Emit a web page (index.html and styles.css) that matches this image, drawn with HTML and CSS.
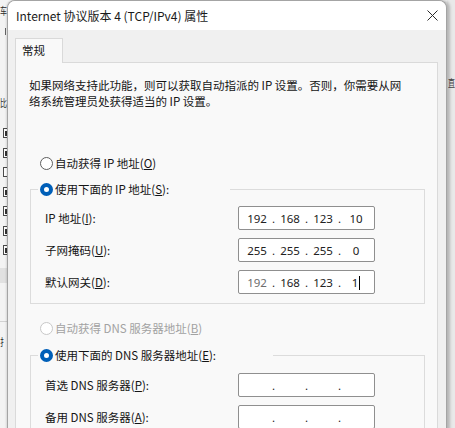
FILE: index.html
```html
<!DOCTYPE html>
<html lang="zh-CN">
<head>
<meta charset="utf-8">
<title>Internet 协议版本 4 (TCP/IPv4) 属性</title>
<link rel="stylesheet" href="styles.css">
</head>
<body>
<div class="desk">
  <!-- window behind the dialog: only its edges show -->
  <div class="bw-left">
    <span class="frag frag-top">车</span>
    <span class="tick"></span>
    <span class="frag frag-mid">比</span>
    <ul class="checks">
      <li class="cb on"></li>
      <li class="cb on"></li>
      <li class="cb"></li>
      <li class="cb on"></li>
      <li class="cb on"></li>
      <li class="cb on"></li>
      <li class="cb on"></li>
    </ul>
    <div class="bw-band"></div>
    <div class="bw-rule"></div>
    <span class="frag frag-low">扌</span>
  </div>
  <div class="bw-main"></div>
  <div class="bw-right"><span class="frag frag-r">直</span></div>

  <section class="dialog">
    <header class="titlebar">
      <span class="title">Internet 协议版本 4 (TCP/IPv4) 属性</span>
      <svg class="close" width="11" height="11" viewBox="0 0 11 11" aria-label="关闭">
        <path d="M0.5 0.5 L10.5 10.5 M10.5 0.5 L0.5 10.5" stroke="#2b2b2b" stroke-width="1" fill="none"/>
      </svg>
    </header>

    <nav class="tabs"><span class="tab">常规</span></nav>

    <div class="panel">
      <p class="desc">如果网络支持此功能，则可以获取自动指派的 IP 设置。否则，你需要从网<br>络系统管理员处获得适当的 IP 设置。</p>

      <div class="opt opt-ip-auto">
        <span class="radio"></span><span>自动获得 IP 地址(<u>O</u>)</span>
      </div>

      <fieldset class="group">
        <legend class="opt legend-ip">
          <span class="radio checked"></span><span>使用下面的 IP 地址(<u>S</u>):</span>
        </legend>
        <div class="rows">
          <label>IP 地址(<u>I</u>):</label>
          <div class="ip"><span class="seg">192</span><span class="dot">.</span><span class="seg">168</span><span class="dot">.</span><span class="seg">123</span><span class="dot">.</span><span class="seg">10</span></div>
          <label>子网掩码(<u>U</u>):</label>
          <div class="ip"><span class="seg">255</span><span class="dot">.</span><span class="seg">255</span><span class="dot">.</span><span class="seg">255</span><span class="dot">.</span><span class="seg">0</span></div>
          <label>默认网关(<u>D</u>):</label>
          <div class="ip"><span class="seg seg-faint">192</span><span class="dot">.</span><span class="seg">168</span><span class="dot">.</span><span class="seg">123</span><span class="dot">.</span><span class="seg">1<span class="caret"></span></span></div>
        </div>
      </fieldset>

      <div class="opt opt-dns-auto disabled">
        <span class="radio"></span><span>自动获得 DNS 服务器地址(<u>B</u>)</span>
      </div>

      <fieldset class="group group-dns">
        <legend class="opt legend-dns">
          <span class="radio checked"></span><span>使用下面的 DNS 服务器地址(<u>E</u>):</span>
        </legend>
        <div class="rows">
          <label>首选 DNS 服务器(<u>P</u>):</label>
          <div class="ip"><span class="seg"></span><span class="dot">.</span><span class="seg"></span><span class="dot">.</span><span class="seg"></span><span class="dot">.</span><span class="seg"></span></div>
          <label>备用 DNS 服务器(<u>A</u>):</label>
          <div class="ip"><span class="seg"></span><span class="dot">.</span><span class="seg"></span><span class="dot">.</span><span class="seg"></span><span class="dot">.</span><span class="seg"></span></div>
        </div>
      </fieldset>
    </div>
  </section>
</div>
</body>
</html>
```

FILE: styles.css
```css
* { box-sizing: border-box; }

body {
  margin: 0;
  font-family: "Noto Sans CJK SC", "Noto Sans", sans-serif;
  font-size: 11.5px;
  color: #141414;
  background: #efefef;
}

.desk {
  position: relative;
  width: 455px;
  height: 428px;
  overflow: hidden;
  display: flex;
}

/* ---- background window edges ---- */
.bw-left {
  width: 7px;
  background: #f3f3f3;
  display: flex;
  flex-direction: column;
}
/* narrow glyphs peeking out beside the dialog */
.frag {
  display: block;
  width: 7px;
  font-size: 7px;
  line-height: 10px;
  color: #2a2a2a;
  transform: scaleY(1.5);
  transform-origin: 0 0;
}
.frag-top { margin: 3px 0 0 0; }
.tick {
  display: block;
  width: 1px;
  height: 7px;
  background: #666;
  margin: 15px 0 0 5px;
}
.frag-mid { margin: 60px 0 0 0; }
.checks {
  list-style: none;
  margin: 23px 0 0;
  padding: 0;
  display: flex;
  flex-direction: column;
  gap: 9.5px;
}
.cb {
  width: 4px;
  height: 10px;
  margin-left: 3px;
  border: 1px solid #4a4a4a;
  border-right: none;
  background: #fff;
}
.cb.on {
  background: linear-gradient(#fff 0 2px, #333 2px 7px, #fff 7px) 1px 0 / 2px 100% no-repeat, #fff;
}
.bw-band {
  height: 15px;
  margin-top: 13px;
  background: #e1e1e1;
}
.bw-rule {
  height: 1px;
  margin-top: 38px;
  background: #d2d2d2;
}
.frag-low { margin: 12px 0 0 0; }

.bw-main { flex: 1; background: #f3f3f3; }

.bw-right {
  width: 8px;
  background: #e9e9e9;
  display: flex;
  flex-direction: column;
  align-items: flex-end;
}
.frag-r { margin-top: 75px; color: #444; }

/* ---- dialog window ---- */
.dialog {
  position: absolute;
  left: 7px;
  top: 0;
  width: 440px;
  height: 450px;
  border: 1px solid #a4a4a4;
  border-bottom: none;
  border-radius: 8px 8px 0 0;
  background: #f0f0f0;
  box-shadow: 3px 0 3px rgba(0, 0, 0, 0.22), -1px 0 2px rgba(0, 0, 0, 0.12);
  overflow: hidden;
}

.titlebar {
  height: 29px;
  background: #fff;
  display: flex;
  align-items: center;
  justify-content: space-between;
  padding: 0 8px;
}
.title {
  font-size: 12px;
  line-height: 16px;
  color: #1a1a1a;
  white-space: nowrap;
}
.close { display: block; }

.tabs {
  display: flex;
  padding: 8px 0 0 7px;
}
.tab {
  position: relative;
  z-index: 1;
  width: 48px;
  height: 25px;
  margin-bottom: -1px;
  padding-left: 6px;
  border: 1px solid #d9d9d9;
  border-bottom: none;
  background: #f9f9f9;
  line-height: 23px;
}

.panel {
  margin: 0 8px 0 7px;
  height: 380px;
  border: 1px solid #dadada;
  background: #f9f9f9;
  padding: 14px 12px 0 13px;
}

.desc {
  margin: 0;
  line-height: 16px;
  white-space: nowrap;
}

/* radio rows */
.opt {
  display: flex;
  align-items: center;
  gap: 2px;
  height: 16px;
  line-height: 16px;
  white-space: nowrap;
}
.opt-ip-auto { margin: 46px 0 0 11px; }
.opt-dns-auto { margin: 16px 0 0 11px; }
.opt.disabled { color: #a2a2a2; }

.radio {
  flex: none;
  width: 13px;
  height: 13px;
  border-radius: 50%;
  border: 1px solid #5e5e5e;
  background: #fff;
}
.radio.checked {
  border: 4px solid #005fb8;
}
.disabled .radio { border-color: #c8c8c8; }

/* group boxes */
.group {
  margin: 10px 0 0 1px;
  padding: 0;
  min-inline-size: 0;
  border: 1px solid #dcdcdc;
}
.group-dns { margin-top: 11px; }
.group legend {
  margin-left: 7px;
  padding: 0 0 0 2px;
  background: #f9f9f9;
}
.legend-ip { width: 192px; }
.legend-dns { width: 235px; }

.rows {
  display: grid;
  grid-template-columns: 193px 137px;
  row-gap: 8px;
  align-items: center;
  padding: 9px 14px 9px 14px;
}
.group-dns .rows { padding-top: 10px; }

label { line-height: 16px; white-space: nowrap; }

/* IPv4 address field */
.ip {
  display: flex;
  align-items: center;
  width: 137px;
  height: 24px;
  padding-left: 5px;
  border: 1px solid #8f8f8f;
  border-radius: 2px;
  background: #fff;
  font-family: "Noto Sans", "Open Sans", sans-serif;
  font-size: 11.5px;
  color: #222;
}
.seg {
  width: 26px;
  text-align: center;
  white-space: nowrap;
}
.dot {
  width: 7px;
  text-align: center;
}
.seg-faint { color: #6d6d6d; }
.caret {
  display: inline-block;
  width: 1px;
  height: 14px;
  margin-left: 1px;
  vertical-align: -3px;
  background: #000;
}
```
